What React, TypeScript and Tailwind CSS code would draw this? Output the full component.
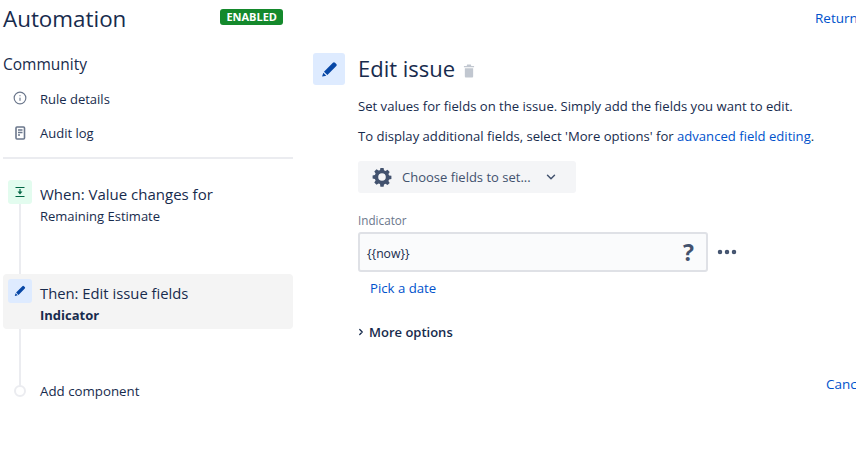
import { ChevronDown, ChevronRight, Info, MoreHorizontal } from "lucide-react";

function PencilIcon({ size }: { size: number }) {
  return (
    <svg width={size} height={size} viewBox="0 0 16 16" fill="#0747a6">
      <path d="M11.2 1.6a1.4 1.4 0 0 1 2 0l1.2 1.2a1.4 1.4 0 0 1 0 2L6 13.2l-3.2-3.2z" />
      <path d="M2.2 11l2.8 2.8-3.6.9a.3.3 0 0 1-.3-.3z" />
    </svg>
  );
}

function Sidebar() {
  return (
    <div className="w-[290px] shrink-0">
      <div className="flex h-[38px] items-center justify-between pr-[10px]">
        <h1 className="text-[22.4px] leading-[38px] text-[#172b4d]">Automation</h1>
        <span className="mb-[4px] rounded-[3px] bg-[#14892c] px-[6px] text-[11px] leading-[16px] font-bold text-white">
          ENABLED
        </span>
      </div>
      <h2 className="mt-[14px] text-[15.5px] leading-[24px] text-[#172b4d]">Community</h2>
      <div className="mt-[7px] flex h-[34px] items-center text-[13px] text-[#172b4d]">
        <span className="flex w-[37px] pl-[10px]">
          <Info size={14} strokeWidth={2} className="-mt-[4px] text-[#6b778c]" />
        </span>
        Rule details
      </div>
      <div className="flex h-[34px] items-center text-[13px] text-[#172b4d]">
        <span className="flex w-[37px] pl-[10px]">
          <svg className="-mt-[2px]" width="14" height="15" viewBox="0 0 14 15" fill="none">
            <rect x="3" y="1" width="8.5" height="12" rx="1" stroke="#6b778c" strokeWidth="1.6" />
            <path d="M5 4h4.5M5 6.5h4.5M5 9h2" stroke="#6b778c" strokeWidth="1.3" />
          </svg>
        </span>
        Audit log
      </div>
      <div className="mt-[6px] h-[2px] bg-[#ebecf0]" />
      <div className="relative mt-[21px]">
        <div className="absolute top-[24px] left-[16px] h-[190px] w-[2px] bg-[#ebecf0]" />
        <div className="relative flex h-[94px] gap-[8px] pl-[5px]">
          <span className="flex h-[24px] w-[24px] shrink-0 items-center justify-center rounded-[3px] bg-[#e3fcef]">
            <svg width="12" height="12" viewBox="0 0 12 12" fill="none" stroke="#006644" strokeWidth="1.2">
              <path d="M1.5 1.5h9M1.5 10.5h9M6 3v4" />
              <path d="M3.5 5.5h5L6 8.5z" fill="#006644" stroke="none" />
            </svg>
          </span>
          <div className="pt-[1px]">
            <div className="text-[15px] leading-[26px] text-[#172b4d]">When: Value changes for</div>
            <div className="text-[13px] leading-[18px] text-[#172b4d]">Remaining Estimate</div>
          </div>
        </div>
        <div className="relative flex h-[55px] gap-[8px] rounded-[4px] bg-[#f4f4f4] pt-[5px] pl-[5px]">
          <span className="flex h-[24px] w-[24px] shrink-0 items-center justify-center rounded-[3px] bg-[#deebff]">
            <PencilIcon size={12} />
          </span>
          <div className="pt-[1px]">
            <div className="text-[14.8px] leading-[26px] text-[#172b4d]">Then: Edit issue fields</div>
            <div className="text-[13px] leading-[18px] font-bold text-[#172b4d]">Indicator</div>
          </div>
        </div>
        <div className="relative mt-[52px] flex items-center gap-[8px] pl-[5px]">
          <span className="flex w-[24px] shrink-0 justify-center">
            <span className="h-[12px] w-[12px] rounded-full border-2 border-[#ebecf0] bg-white" />
          </span>
          <span className="text-[13.3px] leading-[20px] text-[#172b4d]">Add component</span>
        </div>
      </div>
    </div>
  );
}

function EditPanel() {
  return (
    <div className="mt-[53px] w-[510px] shrink-0">
      <div className="flex items-center gap-[13px]">
        <span className="flex h-[32px] w-[32px] items-center justify-center rounded-[3px] bg-[#deebff]">
          <PencilIcon size={17} />
        </span>
        <h2 className="-mt-[2px] text-[22px] leading-[32px] text-[#172b4d]">Edit issue</h2>
        <svg className="-ml-[5px] mt-[3px]" width="12" height="14" viewBox="0 0 13 14" fill="#c1c7d0">
          <path d="M4.5 0h4l.5 1.5h3V3H1V1.5h3zM2 4h9v9a1 1 0 0 1-1 1H3a1 1 0 0 1-1-1z" />
        </svg>
      </div>
      <div className="pl-[45px]">
        <p className="mt-[11px] text-[13.1px] leading-[20px] whitespace-nowrap text-[#172b4d]">
          Set values for fields on the issue. Simply add the fields you want to edit.
        </p>
        <p className="mt-[10px] text-[13.1px] leading-[20px] whitespace-nowrap text-[#172b4d]">
          To display additional fields, select 'More options' for{" "}
          <span className="text-[#0052cc]">advanced field editing</span>.
        </p>
        <div className="mt-[15px] flex h-[32px] w-[218px] items-center rounded-[3px] bg-[#f4f5f7] pl-[14px] text-[13px] text-[#42526e]">
          <svg width="20" height="20" viewBox="0 0 20 20" fill="#42526e">
            <path
              fillRule="evenodd"
              d="M8.4 1h3.2l.4 2.3 1.5.7 2-1.3 2.2 2.2-1.3 2 .7 1.5 2.3.4v3.2l-2.3.4-.7 1.5 1.3 2-2.2 2.2-2-1.3-1.5.7-.4 2.3H8.4L8 17.1l-1.5-.7-2 1.3-2.2-2.2 1.3-2-.7-1.5L.6 11.6V8.4L2.9 8l.7-1.5-1.3-2 2.2-2.2 2 1.3L8 3.3zM10 6.2a3.8 3.8 0 1 0 0 7.6 3.8 3.8 0 0 0 0-7.6z"
            />
          </svg>
          <span className="ml-[10px] pt-[2px]">Choose fields to set...</span>
          <ChevronDown size={14} strokeWidth={2.5} className="ml-[13px]" />
        </div>
        <label className="mt-[19px] block text-[11.7px] leading-[16px] text-[#6b778c]">Indicator</label>
        <div className="mt-[4px] flex items-center gap-[7px]">
          <div className="flex h-[40px] w-[350px] items-center justify-between rounded-[3px] border-2 border-[#dfe1e6] bg-[#fafbfc] pr-[12px] pl-[7px] text-[12.2px] text-[#172b4d]">
            <span className="pt-[4px]">{"{{now}}"}</span>
            <span className="text-[23px] font-bold text-[#42526e]">?</span>
          </div>
          <MoreHorizontal size={24} strokeWidth={2.5} className="text-[#42526e]" />
        </div>
        <div className="mt-[5px] pl-[12px] text-[13.2px] leading-[22px] text-[#0052cc]">Pick a date</div>
        <div className="mt-[22px] flex items-center text-[13px] leading-[22px] font-semibold text-[#172b4d]">
          <ChevronRight size={10} strokeWidth={3} className="mr-[3px] -ml-[2px]" />
          More options
        </div>
      </div>
    </div>
  );
}

export default function App() {
  return (
    <div className="relative h-[458px] w-[856px] overflow-hidden bg-white font-['Open_Sans','Noto_Sans',sans-serif]">
      <div className="flex gap-[20px] pl-[3px]">
        <Sidebar />
        <EditPanel />
      </div>
      {/* these sit past the right edge in the original, so Cancel gets clipped */}
      <span className="absolute top-[8px] left-[815px] text-[13.5px] whitespace-nowrap text-[#0052cc]">Return</span>
      <span className="absolute top-[374px] left-[826px] text-[13.5px] whitespace-nowrap text-[#0052cc]">Cancel</span>
    </div>
  );
}
